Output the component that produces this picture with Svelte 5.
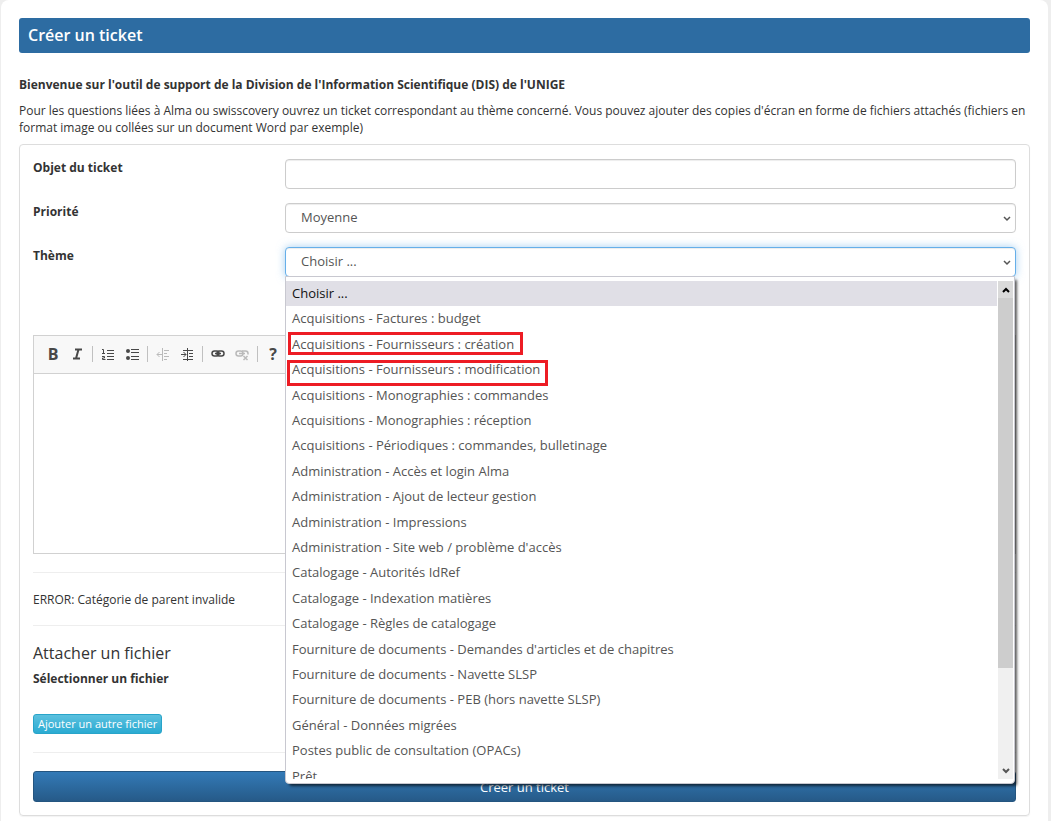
<script>
  let subject = '';
  let priority = 'Moyenne';
  let theme = 'Choisir ...';
  let message = '';

  const themes = [
    { label: 'Choisir ...' },
    { label: 'Acquisitions - Factures : budget' },
    { label: 'Acquisitions - Fournisseurs : création', mark: 'create' },
    { label: 'Acquisitions - Fournisseurs : modification', mark: 'modify' },
    { label: 'Acquisitions - Monographies : commandes' },
    { label: 'Acquisitions - Monographies : réception' },
    { label: 'Acquisitions - Périodiques : commandes, bulletinage' },
    { label: 'Administration - Accès et login Alma' },
    { label: 'Administration - Ajout de lecteur gestion' },
    { label: 'Administration - Impressions' },
    { label: "Administration - Site web / problème d'accès" },
    { label: 'Catalogage - Autorités IdRef' },
    { label: 'Catalogage - Indexation matières' },
    { label: 'Catalogage - Règles de catalogage' },
    { label: "Fourniture de documents - Demandes d'articles et de chapitres" },
    { label: 'Fourniture de documents - Navette SLSP' },
    { label: 'Fourniture de documents - PEB (hors navette SLSP)' },
    { label: 'Général - Données migrées' },
    { label: 'Postes public de consultation (OPACs)' },
    { label: 'Prêt' }
  ];
</script>

<main class="page">
  <h1>Créer un ticket</h1>

  <p class="welcome">Bienvenue sur l'outil de support de la Division de l'Information Scientifique (DIS) de l'UNIGE</p>
  <p class="intro">
    Pour les questions liées à Alma ou swisscovery ouvrez un ticket correspondant au thème concerné. Vous pouvez
    ajouter des copies d'écran en forme de fichiers attachés (fichiers en format image ou collées sur un document
    Word par exemple)
  </p>

  <form class="panel" on:submit|preventDefault>
    <div class="row">
      <label for="subject">Objet du ticket</label>
      <input id="subject" class="control" type="text" bind:value={subject} />
    </div>

    <div class="row">
      <label for="priority">Priorité</label>
      <div class="select-wrap">
        <select id="priority" class="control" bind:value={priority}>
          <option>Moyenne</option>
        </select>
        <svg class="chevron" viewBox="0 0 8 6"><path d="M1 1l3 3 3-3" /></svg>
      </div>
    </div>

    <div class="row">
      <label for="theme">Thème</label>
      <div class="select-wrap">
        <select id="theme" class="control active" bind:value={theme}>
          {#each themes as t}
            <option>{t.label}</option>
          {/each}
        </select>
        <svg class="chevron" viewBox="0 0 8 6"><path d="M1 1l3 3 3-3" /></svg>

        <div class="dropdown">
          <div class="viewport">
            <ul role="listbox" aria-label="Thème">
              {#each themes as t}
                <li role="option" aria-selected={t.label === theme} class:selected={t.label === theme}>
                  {t.label}
                  {#if t.mark}<span class="mark {t.mark}"></span>{/if}
                </li>
              {/each}
            </ul>
          </div>
          <div class="scrollbar">
            <span class="arrow up"><svg viewBox="0 0 8 6"><path d="M1 5l3-3 3 3" /></svg></span>
            <span class="thumb"></span>
            <span class="arrow down"><svg viewBox="0 0 8 6"><path d="M1 1l3 3 3-3" /></svg></span>
          </div>
        </div>
      </div>
    </div>

    <div class="editor">
      <div class="toolbar">
        <button type="button" aria-label="Gras">B</button>
        <button type="button" aria-label="Italique">
          <svg viewBox="0 0 16 16"><path d="M6 3.5h7M4 12.5h7M9.5 3.5l-2.5 9" stroke-width="2" /></svg>
        </button>
        <i class="sep"></i>
        <button type="button" aria-label="Liste numérotée">
          <svg viewBox="0 0 16 16">
            <path d="M7 4.500h7M7 7.500h7M7 10.500h7M7 13.500h7" />
            <path d="M2 3.500h1.500v4M2 7.500h3M2 10.500h2.500v1.500h-2v1.500h3" />
          </svg>
        </button>
        <button type="button" aria-label="Liste à puces">
          <svg viewBox="0 0 16 16">
            <path d="M7 3.500h8M7 6.500h8M7 10.500h8M7 13.500h8" />
            <circle cx="4" cy="5" r="2" /><circle cx="4" cy="12" r="2" />
          </svg>
        </button>
        <i class="sep"></i>
        <button type="button" disabled aria-label="Diminuer le retrait">
          <svg viewBox="0 0 16 16">
            <path d="M7.500 2v13M9 4.500h5M9 7.500h3M9 10.500h5M9 13.500h3M2 8.500h5M4.500 6L2 8.500 4.500 11" />
          </svg>
        </button>
        <button type="button" aria-label="Augmenter le retrait">
          <svg viewBox="0 0 16 16">
            <path d="M8.500 2v13M4 4.500h10M10 7.500h4M10 10.500h4M4 13.500h10M2 8.500h5M4.500 6L7 8.500 4.500 11" />
          </svg>
        </button>
        <i class="sep"></i>
        <button type="button" aria-label="Lien">
          <svg viewBox="0 0 16 16" stroke-width="1.500">
            <rect x="2" y="5" width="7" height="5" rx="2.500" />
            <rect x="7" y="5" width="7" height="5" rx="2.500" />
            <path d="M5 7.500h6" />
          </svg>
        </button>
        <button type="button" disabled aria-label="Supprimer le lien">
          <svg viewBox="0 0 16 16" stroke-width="1.500">
            <rect x="2" y="5" width="7" height="5" rx="2.500" />
            <path d="M5 7.500h6M8 5h3.500q2.500 0 2.500 2.500v1" />
            <path d="M9.500 10l4 4M13.500 10l-4 4" />
          </svg>
        </button>
        <i class="sep"></i>
        <button type="button" aria-label="Aide">?</button>
      </div>
      <textarea aria-label="Message" bind:value={message}></textarea>
    </div>

    <hr />
    <p>ERROR: Catégorie de parent invalide</p>
    <hr />

    <h2>Attacher un fichier</h2>
    <p class="file-label">Sélectionner un fichier</p>
    <button type="button" class="btn-info">Ajouter un autre fichier</button>

    <hr />
    <button type="submit" class="btn-primary">Créer un ticket</button>
  </form>
</main>

<style>
  :global(body) {
    margin: 0;
    background: #eee;
  }

  .page {
    box-sizing: border-box;
    min-height: 100vh;
    margin: 0 3px 0 1px;
    padding: 18px 18px 4px;
    border-radius: 8px 8px 0 0;
    background: #fff;
    color: #333;
    font: 12px/17px 'Open Sans', sans-serif;
  }

  button,
  input,
  select,
  textarea {
    font-family: inherit;
  }

  h1 {
    margin: 0 0 23px;
    padding: 0 9px;
    border-radius: 3px;
    background: #2d6ca2;
    color: #fff;
    font-size: 16px;
    font-weight: 600;
    line-height: 35px;
  }

  p {
    margin: 0;
  }

  .welcome {
    margin-bottom: 9px;
    font-weight: 700;
  }

  .intro {
    margin-bottom: 8px;
  }

  .panel {
    padding: 14px 13px 13px;
    border: 1px solid #ddd;
    border-radius: 4px;
    box-shadow: 0 1px 1px rgba(0, 0, 0, 0.05);
  }

  .row {
    display: grid;
    grid-template-columns: 252px 1fr;
    align-items: start;
    margin-bottom: 14px;
  }

  .row label {
    font-weight: 700;
  }

  .control {
    appearance: none;
    box-sizing: border-box;
    display: block;
    width: 100%;
    height: 30px;
    padding: 0 15px 2px;
    border: 1px solid #ccc;
    border-radius: 4px;
    background: #fff;
    box-shadow: inset 0 1px 1px rgba(0, 0, 0, 0.075);
    color: #555;
    font-size: 13px;
  }

  .control.active {
    border-color: #66afe9;
    box-shadow: inset 0 1px 1px rgba(0, 0, 0, 0.075), 0 0 8px rgba(102, 175, 233, 0.6);
  }

  .select-wrap {
    position: relative;
  }

  .chevron {
    position: absolute;
    top: 13px;
    right: 5px;
    width: 8px;
    height: 6px;
    pointer-events: none;
  }

  .chevron path,
  .arrow path {
    fill: none;
    stroke: #555;
    stroke-width: 1.5;
  }

  .dropdown {
    box-sizing: border-box;
    position: absolute;
    z-index: 2;
    top: 29px;
    left: 0;
    right: 1px;
    display: flex;
    padding: 4px 1px 4px 0;
    border: 1px solid #c8c8d0;
    border-radius: 0 0 4px 4px;
    background: #fff;
    box-shadow: 3px 3px 3px -1px rgba(0, 0, 0, 0.65);
  }

  .viewport {
    flex: 1;
    height: 498px;
    overflow: hidden;
  }

  ul {
    display: grid;
    grid-template-rows: repeat(20, 1fr);
    height: 508px;
    margin: 0;
    padding: 0;
    list-style: none;
  }

  li {
    position: relative;
    padding: 0 6px;
    color: #555;
    font-size: 13px;
    line-height: 25px;
  }

  li.selected {
    margin-right: 1px;
    background: #e0dfe6;
    color: #111;
  }

  /* red frames around the supplier themes */
  .mark {
    box-sizing: border-box;
    position: absolute;
    border: 3px solid #ed1c24;
  }

  .mark.create {
    top: 0;
    left: 2px;
    width: 235px;
    height: 23px;
  }

  .mark.modify {
    top: 3px;
    left: 1px;
    width: 261px;
    height: 26px;
  }

  .scrollbar {
    display: flex;
    flex-direction: column;
    width: 15px;
    background: #f0f0f0;
  }

  .arrow {
    display: flex;
    align-items: center;
    justify-content: center;
    height: 17px;
  }

  .arrow svg {
    width: 8px;
    height: 6px;
  }

  .arrow path {
    stroke-width: 2;
  }

  .arrow.up {
    background: #dadada;
  }

  .arrow.up path {
    stroke: #000;
  }

  .arrow.down {
    margin-top: auto;
  }

  .thumb {
    height: 370px;
    background: #cdcdcd;
  }

  .editor {
    margin: 58px 0 18px;
    border: 1px solid #d1d1d1;
  }

  .toolbar {
    box-sizing: border-box;
    display: flex;
    align-items: center;
    height: 38px;
    padding: 0 0 2px 7px;
    border-bottom: 1px solid #d1d1d1;
    background: #f8f8f8;
  }

  .toolbar button {
    display: flex;
    align-items: center;
    justify-content: center;
    width: 24px;
    height: 24px;
    padding: 0;
    border: 0;
    background: none;
    color: #484848;
    font-size: 16px;
    font-weight: 700;
  }

  .toolbar button:disabled {
    opacity: 0.35;
  }

  .toolbar svg {
    width: 16px;
    height: 16px;
    fill: none;
    stroke: #484848;
  }

  .toolbar circle {
    fill: #484848;
    stroke: none;
  }

  .sep {
    width: 1px;
    height: 16px;
    margin: 0 3px;
    background: #c0c0c0;
  }

  textarea {
    box-sizing: border-box;
    display: block;
    width: 100%;
    height: 179px;
    border: 0;
    resize: none;
  }

  hr {
    height: 1px;
    margin: 17px 0 18px;
    border: 0;
    background: #eee;
  }

  h2 {
    margin: 0 0 8px;
    font-size: 16px;
    font-weight: 400;
    line-height: 18px;
  }

  .file-label {
    margin-bottom: 27px;
    font-weight: 700;
  }

  .btn-info {
    display: block;
    height: 20px;
    margin-bottom: 18px;
    padding: 0 4px;
    border: 1px solid #28a4c9;
    border-radius: 3px;
    background: linear-gradient(#5bc0de, #2aabd2);
    color: #fff;
    font-size: 11px;
    line-height: 18px;
  }

  .btn-primary {
    display: block;
    width: 100%;
    height: 31px;
    padding: 0;
    border: 1px solid #245580;
    border-radius: 3px;
    background: linear-gradient(#337ab7, #265a88);
    color: #fff;
    font-size: 13px;
  }
</style>
